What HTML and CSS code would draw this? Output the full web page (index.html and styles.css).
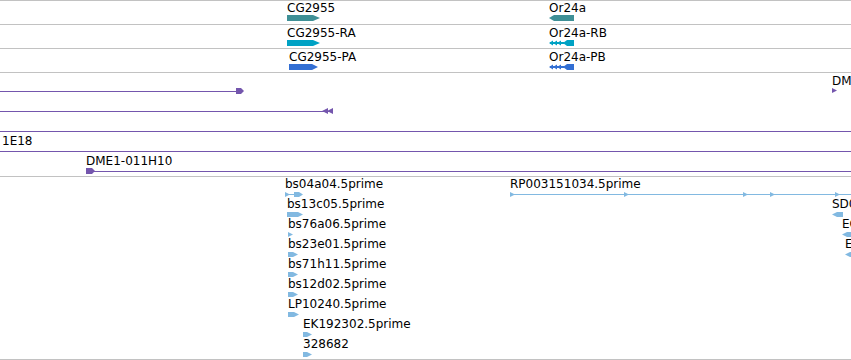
FILE: index.html
```html
<!DOCTYPE html>
<html lang="en">
<head>
  <meta charset="utf-8" />
  <title>Track view – 2L region</title>
  <link rel="stylesheet" href="styles.css">
</head>
<body>
  <main class="tracks">
    <!-- gene track -->
    <section class="track genes">
      <div class="feat" style="left:287px;top:0">
        <span class="label">CG2955</span>
        <svg class="gene" width="33" height="6"><polygon points="0,0 26,0 33,3 26,6 0,6"/></svg>
      </div>
      <div class="feat" style="left:549px;top:0">
        <span class="label">Or24a</span>
        <svg class="gene" width="25" height="6"><polygon points="0,3 5,0 25,0 25,6 5,6 "/></svg>
      </div>
    </section>

    <!-- transcripts -->
    <section class="track genes">
      <div class="feat" style="left:287px;top:1px">
        <span class="label">CG2955-RA</span>
        <svg class="rna" width="33" height="6"><polygon points="0,0 26,0 33,3 26,6 0,6"/></svg>
      </div>
      <div class="feat" style="left:549px;top:1px">
        <span class="label">Or24a-RB</span>
        <svg class="rna" width="25" height="6">
          <rect x="1" y="2" width="14" height="2"/>
          <polygon points="0,3 4,0.5 4,5.5"/><polygon points="4,3 8,0.5 8,5.5"/><polygon points="8,3 12,0.5 12,5.5"/>
          <polygon points="14,3 18,0 25,0 25,6 18,6"/>
        </svg>
      </div>
    </section>

    <!-- proteins -->
    <section class="track genes">
      <div class="feat" style="left:289px;top:1px">
        <span class="label">CG2955-PA</span>
        <svg class="prot" width="29" height="6"><polygon points="0,0 23,0 29,3 23,6 0,6"/></svg>
      </div>
      <div class="feat" style="left:549px;top:1px">
        <span class="label">Or24a-PB</span>
        <svg class="prot" width="25" height="6">
          <rect x="1" y="2" width="14" height="2"/>
          <polygon points="0,3 4,0.5 4,5.5"/><polygon points="4,3 8,0.5 8,5.5"/><polygon points="8,3 12,0.5 12,5.5"/>
          <polygon points="14,3 18,0 25,0 25,6 18,6"/>
        </svg>
      </div>
    </section>

    <!-- BAC clones -->
    <section class="track clones">
      <svg class="clone" style="left:0;top:15px" width="245" height="7">
        <rect x="0" y="3" width="238" height="1"/>
        <polygon points="236,0 241,0 244,3 241,6 236,6"/>
      </svg>
      <svg class="clone" style="left:0;top:35px" width="334" height="7">
        <rect x="0" y="3" width="330" height="1"/>
        <polygon points="322,3 328,0 328,6"/><polygon points="327,3 333,0 333,6"/>
      </svg>
      <div class="feat" style="left:832px;top:1px">
        <span class="label">DME1-020J04</span>
        <svg class="clone-tip" width="5" height="5"><polygon points="0,0 5,2.5 0,5"/></svg>
      </div>
      <div class="rule" style="top:58px"></div>
      <div class="feat" style="left:2px;top:61px"><span class="label">1E18</span></div>
      <div class="rule" style="top:78px"></div>
      <div class="feat" style="left:86px;top:81px">
        <span class="label">DME1-011H10</span>
        <svg class="clone-tip" width="765" height="6">
          <rect x="6" y="3" width="759" height="1"/>
          <polygon points="0,0 6,0 9,3 6,6 0,6"/>
        </svg>
      </div>
    </section>

    <!-- ESTs -->
    <section class="track ests">
      <div class="feat" style="left:285px;top:0">
        <span class="label">bs04a04.5prime</span>
        <svg class="est" width="18" height="5">
          <rect x="3" y="2" width="8" height="1"/>
          <polygon points="0,0 5,2.5 0,5"/>
          <polygon points="9,0 14,0 18,2.5 14,5 9,5"/>
        </svg>
      </div>
      <div class="feat" style="left:287px;top:20px">
        <span class="label">bs13c05.5prime</span>
        <svg class="est" width="16" height="5"><polygon points="0,0 11,0 16,2.5 11,5 0,5"/></svg>
      </div>
      <div class="feat" style="left:288px;top:40px">
        <span class="label">bs76a06.5prime</span>
        <svg class="est" width="5" height="5"><polygon points="0,0 5,2.5 0,5"/></svg>
      </div>
      <div class="feat" style="left:288px;top:60px">
        <span class="label">bs23e01.5prime</span>
        <svg class="est" width="10" height="5"><polygon points="0,0 5,0 10,2.5 5,5 0,5"/></svg>
      </div>
      <div class="feat" style="left:288px;top:80px">
        <span class="label">bs71h11.5prime</span>
        <svg class="est" width="10" height="5"><polygon points="0,0 5,0 10,2.5 5,5 0,5"/></svg>
      </div>
      <div class="feat" style="left:288px;top:100px">
        <span class="label">bs12d02.5prime</span>
        <svg class="est" width="10" height="5"><polygon points="0,0 5,0 10,2.5 5,5 0,5"/></svg>
      </div>
      <div class="feat" style="left:288px;top:120px">
        <span class="label">LP10240.5prime</span>
        <svg class="est" width="11" height="5"><polygon points="0,0 6,0 11,2.5 6,5 0,5"/></svg>
      </div>
      <div class="feat" style="left:303px;top:140px">
        <span class="label">EK192302.5prime</span>
        <svg class="est" width="9" height="5"><polygon points="0,0 4,0 9,2.5 4,5 0,5"/></svg>
      </div>
      <div class="feat" style="left:303px;top:160px">
        <span class="label">328682</span>
        <svg class="est" width="9" height="5"><polygon points="0,0 4,0 9,2.5 4,5 0,5"/></svg>
      </div>

      <div class="feat" style="left:510px;top:0">
        <span class="label">RP003151034.5prime</span>
        <svg class="est" width="341" height="5">
          <rect x="0" y="2" width="341" height="1"/>
          <polygon points="0,0 5,2.5 0,5"/>
          <polygon points="114,0 119,2.5 114,5"/>
          <polygon points="233,0 238,2.5 233,5"/>
          <polygon points="260,0 265,2.5 260,5"/>
          <polygon points="325,0 330,2.5 325,5"/>
        </svg>
      </div>
      <div class="feat" style="left:832px;top:20px">
        <span class="label">SD04325.5prime</span>
        <svg class="est" width="11" height="5"><polygon points="0,2.5 5,0 11,0 11,5 5,5"/></svg>
      </div>
      <div class="feat" style="left:842px;top:40px">
        <span class="label">EC294107.5prime</span>
        <svg class="est" width="9" height="5"><polygon points="0,2.5 5,0 9,0 9,5 5,5"/></svg>
      </div>
      <div class="feat" style="left:845px;top:60px">
        <span class="label">EK211437.5prime</span>
        <svg class="est" width="8" height="5"><polygon points="0,2.5 5,0 8,0 8,5 5,5"/></svg>
      </div>
    </section>
  </main>
</body>
</html>
```

FILE: styles.css
```css
/* track palette */
:root{
  --c-rule:#c2c2c2;
  --c-gene:#3f9096;
  --c-rna:#00a2c4;
  --c-prot:#336fd3;
  --c-clone:#7456ad;
  --c-est:#82b9e1;
}

html,body{margin:0;padding:0;}

body{
  width:851px;height:360px;overflow:hidden;
  background:#fff;color:#000;
  font:12px/14px "DejaVu Sans",Verdana,sans-serif;
}

.tracks{display:flex;flex-direction:column;}

.track{
  position:relative;
  box-sizing:border-box;
  border-top:1px solid var(--c-rule);
}
.track.genes{height:24px;}
.track.clones{height:104px;}
.track.ests{height:184px;border-bottom:1px solid var(--c-rule);}

/* one feature = label on top, glyph under it */
.feat{position:absolute;white-space:nowrap;}
.feat .label{display:block;}
.feat svg{display:block;}
.ests .feat svg{margin-top:1px;}

svg.clone{position:absolute;}

.gene{fill:var(--c-gene);}
.rna{fill:var(--c-rna);}
.prot{fill:var(--c-prot);}
.clone,.clone-tip{fill:var(--c-clone);}
.est{fill:var(--c-est);}

.rule{position:absolute;left:0;right:0;height:1px;background:var(--c-clone);}
```
